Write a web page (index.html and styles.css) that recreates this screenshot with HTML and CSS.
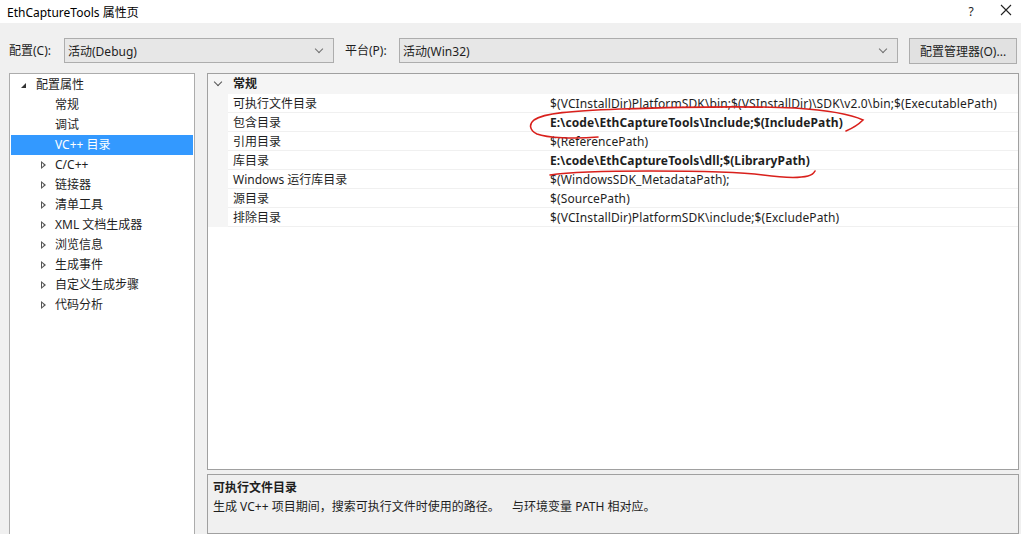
FILE: index.html
```html
<!DOCTYPE html>
<html lang="zh-CN">
<head>
 <meta charset="UTF-8">
 <title>EthCaptureTools 属性页</title>
 <link rel="stylesheet" href="styles.css">
</head>
<body>
 <div class="titlebar">
   <span class="title">EthCaptureTools 属性页</span>
   <span class="help">?</span>
   <span class="close">
     <svg width="12" height="12" viewBox="0 0 12 12"><path d="M1 1 L11 11 M11 1 L1 11" stroke="#222" stroke-width="1.1" fill="none"/></svg>
   </span>
 </div>

 <div class="toolbar">
   <label class="lbl lbl-config">配置(C):</label>
   <div class="combo combo-config"><span>活动(Debug)</span><i class="chev"></i></div>
   <label class="lbl lbl-platform">平台(P):</label>
   <div class="combo combo-platform"><span>活动(Win32)</span><i class="chev"></i></div>
   <button class="btn">配置管理器(O)...</button>
 </div>

 <div class="main">
   <div class="tree">
     <div class="node root"><i class="tri-open"></i>配置属性</div>
     <div class="node leaf">常规</div>
     <div class="node leaf">调试</div>
     <div class="node leaf selected">VC++ 目录</div>
     <div class="node"><i class="tri"></i>C/C++</div>
     <div class="node"><i class="tri"></i>链接器</div>
     <div class="node"><i class="tri"></i>清单工具</div>
     <div class="node"><i class="tri"></i>XML 文档生成器</div>
     <div class="node"><i class="tri"></i>浏览信息</div>
     <div class="node"><i class="tri"></i>生成事件</div>
     <div class="node"><i class="tri"></i>自定义生成步骤</div>
     <div class="node"><i class="tri"></i>代码分析</div>
   </div>

   <div class="right">
     <div class="grid">
       <div class="cat"><i class="cat-chev"></i>常规</div>
       <div class="prop"><div class="name">可执行文件目录</div><div class="val">$(VCInstallDir)PlatformSDK\bin;$(VSInstallDir)\SDK\v2.0\bin;$(ExecutablePath)</div></div>
       <div class="prop"><div class="name">包含目录</div><div class="val bold">E:\code\EthCaptureTools\Include;$(IncludePath)</div></div>
       <div class="prop"><div class="name">引用目录</div><div class="val">$(ReferencePath)</div></div>
       <div class="prop"><div class="name">库目录</div><div class="val bold">E:\code\EthCaptureTools\dll;$(LibraryPath)</div></div>
       <div class="prop"><div class="name">Windows 运行库目录</div><div class="val">$(WindowsSDK_MetadataPath);</div></div>
       <div class="prop"><div class="name">源目录</div><div class="val">$(SourcePath)</div></div>
       <div class="prop"><div class="name">排除目录</div><div class="val">$(VCInstallDir)PlatformSDK\include;$(ExcludePath)</div></div>
     </div>
     <div class="desc">
       <div class="desc-title">可执行文件目录</div>
       <div class="desc-text">生成 VC++ 项目期间，搜索可执行文件时使用的路径。&nbsp;&nbsp;&nbsp; 与环境变量 PATH 相对应。</div>
     </div>
   </div>
 </div>

 <!-- 手绘红色标注 -->
 <svg class="marks" width="1021" height="534" viewBox="0 0 1021 534">
   <path d="M598 137 C575 139 547 138 537 134 C529 130 529 124 534 120 C544 113 570 111 620 109 C680 107 750 106 795 108 C825 110 850 114 863 120 C859 124 853 128 846 131" stroke="#d9201c" stroke-width="1.6" fill="none" stroke-linecap="round"/>
   <path d="M550 175 C570 172 600 171 650 171 C700 171 740 172 763 175 C785 178 800 178 808 176 C812 175 814 173 815 171" stroke="#d9201c" stroke-width="1.6" fill="none" stroke-linecap="round"/>
 </svg>
</body>
</html>
```

FILE: styles.css
```css
body { margin: 0; width: 1021px; height: 534px; overflow: hidden; background: #f0f0f0; font-family: "Noto Sans", "Noto Sans CJK SC", sans-serif; font-size: 12px; color: #1e1e1e; position: relative; }

.titlebar { height: 23px; background: #fff; display: flex; align-items: center; padding-left: 7px; }
.title { flex: 1; font-size: 12px; color: #000; }
.help { width: 40px; text-align: center; font-size: 12px; color: #222; }
.close { width: 30px; display: flex; justify-content: center; padding-bottom: 4px; }

.toolbar { height: 50px; display: flex; align-items: flex-start; padding-top: 15px; box-sizing: border-box; }
.lbl { line-height: 25px; }
.lbl-config { margin-left: 9px; width: 55px; }
.lbl-platform { margin-left: 11px; width: 54px; }
.combo { height: 25px; box-sizing: border-box; border: 1px solid #adadad; background: #e7e7e7; display: flex; align-items: center; padding-left: 3px; position: relative; }
.combo-config { width: 270px; }
.combo-platform { width: 499px; }
.combo span { flex: 1; }
.chev { width: 5px; height: 5px; border-right: 1px solid #707070; border-bottom: 1px solid #707070; transform: rotate(45deg); margin-right: 11px; margin-top: -4px; }
.btn { margin-left: 11px; width: 108px; height: 26px; border: 1px solid #adadad; background: #e1e1e1; font-family: inherit; font-size: 12px; color: #1e1e1e; padding: 0; }

.main { display: flex; padding-left: 9px; gap: 12px; }

.tree { width: 186px; height: 480px; box-sizing: border-box; border: 1px solid #acacac; background: #fff; padding-top: 1px; }
.node { height: 20px; line-height: 20px; padding-left: 44px; margin-left: 1px; position: relative; }
.node.root { padding-left: 25px; }
.node.leaf { padding-left: 44px; }
.node.selected { background: #3399ff; color: #fff; margin-right: 1px; }
.tri-open { position: absolute; left: 10px; top: 8px; width: 0; height: 0; border-left: 5px solid transparent; border-bottom: 5px solid #333; }
.tri { position: absolute; left: 30px; top: 6px; width: 0; height: 0; border-top: 4px solid transparent; border-bottom: 4px solid transparent; border-left: 5px solid #555; }
.tri::after { content: ""; position: absolute; left: -4px; top: -2px; border-top: 2px solid transparent; border-bottom: 2px solid transparent; border-left: 2px solid #fff; }

.right { width: 812px; display: flex; flex-direction: column; gap: 4px; }
.grid { height: 397px; box-sizing: border-box; border: 1px solid #a0a0a0; background: #fff; display: flex; flex-direction: column; }
.cat { height: 20px; line-height: 20px; background: #f5f5f5; padding-left: 25px; font-weight: bold; position: relative; }
.cat-chev { position: absolute; left: 7px; top: 5px; width: 5px; height: 5px; border-right: 1.5px solid #555; border-bottom: 1.5px solid #555; transform: rotate(45deg); }
.prop { height: 19px; line-height: 19px; display: flex; border-left: 20px solid #f5f5f5; }
.prop .name { width: 318px; padding-left: 5px; border-bottom: 1px solid #f0f0f0; box-sizing: border-box; }
.prop .val { flex: 1; padding-left: 4px; border-bottom: 1px solid #f0f0f0; box-sizing: border-box; white-space: nowrap; letter-spacing: 0.12px; }
.prop .val.bold { font-weight: bold; }

.desc { height: 60px; box-sizing: border-box; border: 1px solid #a0a0a0; background: #f0f0f0; padding: 3px 5px; }
.desc-title { font-weight: bold; line-height: 19px; }
.desc-text { line-height: 19px; }

.marks { position: absolute; left: 0; top: 0; pointer-events: none; }
```
